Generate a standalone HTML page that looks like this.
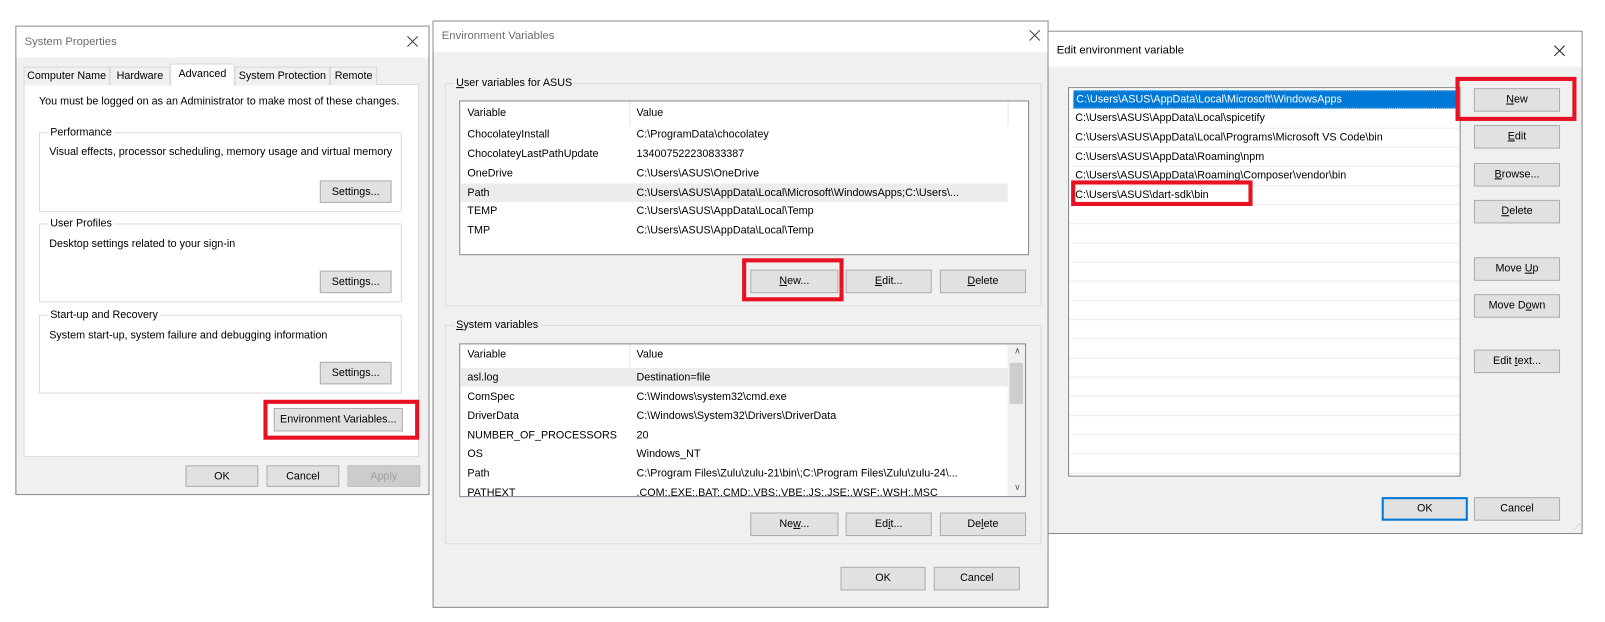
<!DOCTYPE html>
<html><head><meta charset="utf-8"><style>
*{box-sizing:border-box;margin:0;padding:0}
body{width:1605px;height:622px;overflow:hidden;background:#fff;font-family:"Liberation Sans",sans-serif;font-size:10.5px;color:#000}
#w{position:absolute;left:0;top:0;width:1566px;height:607px;transform:scale(1.025);transform-origin:0 0}
.a{position:absolute}
.dlg{position:absolute;background:#f0f0f0;border:1px solid #888}
.tb{position:absolute;left:0;top:0;right:0;background:#fff}
.tt{position:absolute;left:8px;color:#6d6d6d;font-size:11px}
.x{position:absolute;width:11px;height:11px}
.btn{position:absolute;background:#e1e1e1;border:1px solid #adadad;text-align:center;line-height:20px;white-space:nowrap}
.grp{position:absolute;border:1px solid #dcdcdc}
.gl{position:absolute;top:-8px;left:8px;padding:0 2px;background:#f0f0f0;line-height:14px}
.red{position:absolute;border:4px solid #e81123}
.list{position:absolute;background:#fff;border:1px solid #828790;overflow:hidden}
.r{position:absolute;left:0;right:0;height:18px;line-height:18px;white-space:nowrap}
.r span{position:absolute}
u{text-decoration:underline}
</style></head><body><div id="w">

<!-- System Properties -->
<div class="dlg" style="left:15px;top:25px;width:404px;height:458px;">
 <div class="tb" style="height:30px"><div class="tt" style="top:9px">System Properties</div><svg class="x" style="right:10px;top:9px" viewBox="0 0 11 11"><path d="M0.5 0.5L10.5 10.5M10.5 0.5L0.5 10.5" stroke="#444" stroke-width="1"/></svg></div>
 <div class="a" style="left:7px;top:56px;width:386px;height:364px;background:#fff;border:1px solid #d9d9d9"></div>
 <div class="a" style="left:7px;top:39px;width:84px;height:18px;border:1px solid #d9d9d9;border-bottom:none;background:#f0f0f0;line-height:17px;text-align:center">Computer Name</div>
 <div class="a" style="left:91px;top:39px;width:59px;height:18px;border:1px solid #d9d9d9;border-bottom:none;background:#f0f0f0;line-height:17px;text-align:center">Hardware</div>
 <div class="a" style="left:150px;top:36px;width:63px;height:22px;border:1px solid #d9d9d9;border-bottom:none;background:#fff;line-height:18px;text-align:center">Advanced</div>
 <div class="a" style="left:213px;top:39px;width:93px;height:18px;border:1px solid #d9d9d9;border-bottom:none;background:#f0f0f0;line-height:17px;text-align:center">System Protection</div>
 <div class="a" style="left:306px;top:39px;width:46px;height:18px;border:1px solid #d9d9d9;border-bottom:none;background:#f0f0f0;line-height:17px;text-align:center">Remote</div>
 <div class="a" style="left:22px;top:67px;white-space:nowrap">You must be logged on as an Administrator to make most of these changes.</div>
 <div class="grp" style="left:22px;top:103px;width:354px;height:78px"><div class="gl" style="background:#fff">Performance</div>
  <div class="a" style="left:9px;top:12px;white-space:nowrap">Visual effects, processor scheduling, memory usage and virtual memory</div>
  <div class="btn" style="left:273px;top:46px;width:70px;height:22px">Settings...</div></div>
 <div class="grp" style="left:22px;top:192px;width:354px;height:77px"><div class="gl" style="background:#fff">User Profiles</div>
  <div class="a" style="left:9px;top:13px">Desktop settings related to your sign-in</div>
  <div class="btn" style="left:273px;top:45px;width:70px;height:22px">Settings...</div></div>
 <div class="grp" style="left:22px;top:281px;width:354px;height:77px"><div class="gl" style="background:#fff">Start-up and Recovery</div>
  <div class="a" style="left:9px;top:13px">System start-up, system failure and debugging information</div>
  <div class="btn" style="left:273px;top:45px;width:70px;height:22px">Settings...</div></div>
 <div class="btn" style="left:251px;top:372px;width:126px;height:23px">Environment Variables...</div>
 <div class="red" style="left:241px;top:364px;width:152px;height:39px"></div>
 <div class="btn" style="left:165px;top:428px;width:71px;height:21px">OK</div>
 <div class="btn" style="left:244px;top:428px;width:71px;height:21px">Cancel</div>
 <div class="btn" style="left:323px;top:428px;width:71px;height:21px;color:#a0a0a0;background:#cccccc;border-color:#bfbfbf">Apply</div>
</div>

<!-- Environment Variables -->
<div class="dlg" style="left:422px;top:20px;width:601px;height:573px;">
 <div class="tb" style="height:30px"><div class="tt" style="top:8px">Environment Variables</div><svg class="x" style="right:7px;top:8px" viewBox="0 0 11 11"><path d="M0.5 0.5L10.5 10.5M10.5 0.5L0.5 10.5" stroke="#444" stroke-width="1"/></svg></div>
 <div class="grp" style="left:11px;top:60px;width:582px;height:218px"><div class="gl"><u>U</u>ser variables for ASUS</div></div>
 <div class="list" style="left:25px;top:77px;width:556px;height:151px">
  <div class="a" style="left:165px;top:0;width:1px;height:24px;background:#e5e5e5"></div>
  <div class="a" style="left:534px;top:0;width:1px;height:24px;background:#e5e5e5"></div>
  <div class="r" style="top:2px"><span style="left:7px">Variable</span><span style="left:172px">Value</span></div>
  <div class="r" style="top:23px"><span style="left:7px">ChocolateyInstall</span><span style="left:172px">C:\ProgramData\chocolatey</span></div>
  <div class="r" style="top:42px"><span style="left:7px">ChocolateyLastPathUpdate</span><span style="left:172px">134007522230833387</span></div>
  <div class="r" style="top:61px"><span style="left:7px">OneDrive</span><span style="left:172px">C:\Users\ASUS\OneDrive</span></div>
  <div class="r" style="top:80px;right:20px;background:#ececec"><span style="left:7px">Path</span><span style="left:172px">C:\Users\ASUS\AppData\Local\Microsoft\WindowsApps;C:\Users\...</span></div>
  <div class="r" style="top:98px"><span style="left:7px">TEMP</span><span style="left:172px">C:\Users\ASUS\AppData\Local\Temp</span></div>
  <div class="r" style="top:117px"><span style="left:7px">TMP</span><span style="left:172px">C:\Users\ASUS\AppData\Local\Temp</span></div>
 </div>
 <div class="btn" style="left:309px;top:242px;width:86px;height:23px"><u>N</u>ew...</div>
 <div class="btn" style="left:402px;top:242px;width:84px;height:23px"><u>E</u>dit...</div>
 <div class="btn" style="left:494px;top:242px;width:84px;height:23px"><u>D</u>elete</div>
 <div class="red" style="left:301px;top:231px;width:99px;height:42px"></div>
 <div class="grp" style="left:11px;top:296px;width:582px;height:214px"><div class="gl"><u>S</u>ystem variables</div></div>
 <div class="list" style="left:25px;top:314px;width:553px;height:150px">
  <div class="a" style="left:165px;top:0;width:1px;height:24px;background:#e5e5e5"></div>
  <div class="a" style="right:0;top:0;width:17px;height:148px;background:#f0f0f0"></div>
  <div class="a" style="right:2px;top:18px;width:13px;height:40px;background:#cdcdcd"></div>
  <div class="a" style="right:4px;top:1px;font-size:9px;color:#606060">&#x2227;</div>
  <div class="a" style="right:4px;bottom:3px;font-size:9px;color:#606060">&#x2228;</div>
  <div class="r" style="top:1px"><span style="left:7px">Variable</span><span style="left:172px">Value</span></div>
  <div class="r" style="top:23px;right:17px;background:#ececec"><span style="left:7px">asl.log</span><span style="left:172px">Destination=file</span></div>
  <div class="r" style="top:42px"><span style="left:7px">ComSpec</span><span style="left:172px">C:\Windows\system32\cmd.exe</span></div>
  <div class="r" style="top:61px"><span style="left:7px">DriverData</span><span style="left:172px">C:\Windows\System32\Drivers\DriverData</span></div>
  <div class="r" style="top:80px"><span style="left:7px">NUMBER_OF_PROCESSORS</span><span style="left:172px">20</span></div>
  <div class="r" style="top:98px"><span style="left:7px">OS</span><span style="left:172px">Windows_NT</span></div>
  <div class="r" style="top:117px"><span style="left:7px">Path</span><span style="left:172px">C:\Program Files\Zulu\zulu-21\bin\;C:\Program Files\Zulu\zulu-24\...</span></div>
  <div class="r" style="top:136px"><span style="left:7px">PATHEXT</span><span style="left:172px">.COM;.EXE;.BAT;.CMD;.VBS;.VBE;.JS;.JSE;.WSF;.WSH;.MSC</span></div>
 </div>
 <div class="btn" style="left:309px;top:479px;width:86px;height:23px">Ne<u>w</u>...</div>
 <div class="btn" style="left:402px;top:479px;width:84px;height:23px">Ed<u>i</u>t...</div>
 <div class="btn" style="left:494px;top:479px;width:84px;height:23px">De<u>l</u>ete</div>
 <div class="btn" style="left:397px;top:532px;width:83px;height:23px">OK</div>
 <div class="btn" style="left:488px;top:532px;width:84px;height:23px">Cancel</div>
</div>

<!-- Edit environment variable -->
<div class="dlg" style="left:1022px;top:30px;width:522px;height:491px;">
 <div class="tb" style="height:34px"><div class="tt" style="top:12px;color:#000">Edit environment variable</div><svg class="x" style="right:16px;top:13px" viewBox="0 0 11 11"><path d="M0.5 0.5L10.5 10.5M10.5 0.5L0.5 10.5" stroke="#222" stroke-width="1"/></svg></div>
 <div class="list" style="left:19px;top:54px;width:383px;height:380px;background:#fff repeating-linear-gradient(to bottom,transparent 0,transparent 17.7px,#ececec 17.7px,#ececec 18.7px);background-position:0 2px">
  <div class="r" style="top:2px;left:4px;right:2px;background:#0078d7;color:#fff;border:1px dotted #99c9ef"><span style="left:2px;top:-1px">C:\Users\ASUS\AppData\Local\Microsoft\WindowsApps</span></div>
  <div class="r" style="top:20px"><span style="left:6px">C:\Users\ASUS\AppData\Local\spicetify</span></div>
  <div class="r" style="top:39px"><span style="left:6px">C:\Users\ASUS\AppData\Local\Programs\Microsoft VS Code\bin</span></div>
  <div class="r" style="top:58px"><span style="left:6px">C:\Users\ASUS\AppData\Roaming\npm</span></div>
  <div class="r" style="top:76px"><span style="left:6px">C:\Users\ASUS\AppData\Roaming\Composer\vendor\bin</span></div>
  <div class="r" style="top:95px"><span style="left:6px">C:\Users\ASUS\dart-sdk\bin</span></div>
 </div>
 <div class="red" style="left:22px;top:145px;width:177px;height:25px"></div>
 <div class="btn" style="left:415px;top:55px;width:84px;height:23px"><u>N</u>ew</div>
 <div class="red" style="left:397px;top:44px;width:118px;height:43px"></div>
 <div class="btn" style="left:415px;top:91px;width:84px;height:23px"><u>E</u>dit</div>
 <div class="btn" style="left:415px;top:128px;width:84px;height:23px"><u>B</u>rowse...</div>
 <div class="btn" style="left:415px;top:164px;width:84px;height:23px"><u>D</u>elete</div>
 <div class="btn" style="left:415px;top:220px;width:84px;height:23px">Move <u>U</u>p</div>
 <div class="btn" style="left:415px;top:256px;width:84px;height:23px">Move D<u>o</u>wn</div>
 <div class="btn" style="left:415px;top:310px;width:84px;height:23px">Edit <u>t</u>ext...</div>
 <div class="btn" style="left:325px;top:454px;width:84px;height:23px;border:2px solid #0078d7;line-height:19px">OK</div>
 <div class="btn" style="left:415px;top:454px;width:84px;height:23px">Cancel</div>
 <div class="a" style="right:2px;bottom:2px;font-size:7px;color:#999;letter-spacing:-1px">⋰</div>
</div>

</div></body></html>
